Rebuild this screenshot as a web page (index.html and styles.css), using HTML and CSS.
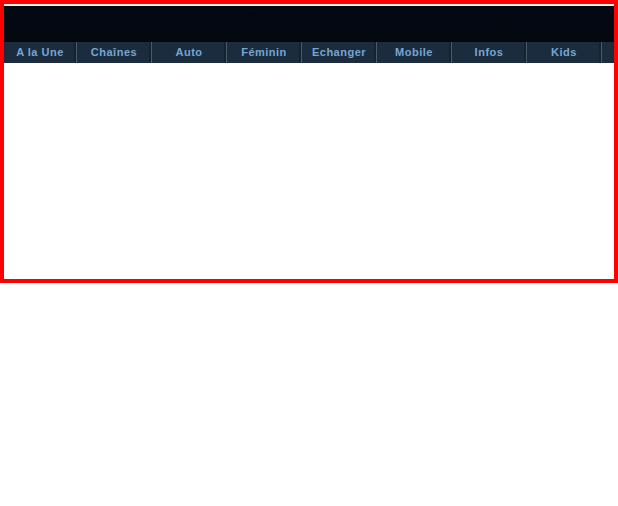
FILE: index.html
```html
<!DOCTYPE html>
<html lang="fr">
<head>
    <meta charset="UTF-8">
    <title>Portail</title>
    <link rel="stylesheet" href="styles.css">
</head>
<body>
    <div id="frame">
        <div class="top-line"></div>
        <div id="header"></div>
        <ul class="nav">
            <li class="first">A la Une</li>
            <li>Chaînes</li>
            <li>Auto</li>
            <li>Féminin</li>
            <li>Echanger</li>
            <li>Mobile</li>
            <li>Infos</li>
            <li>Kids</li>
        </ul>
        <div id="main"></div>
    </div>
</body>
</html>
```

FILE: styles.css
```css
*, *::before, *::after {
    box-sizing: border-box;
}

body {
    margin: 0;
    background-color: #ffffff;
    font-family: "Liberation Sans", Arial, sans-serif;
}

#frame {
    width: 618px;
    height: 283px;
    border: 4px solid #ff0000;
    display: flex;
    flex-direction: column;
    background-color: #ffffff;
}

.top-line {
    height: 2px;
    background-color: #fbeee6;
}

#header {
    height: 36px;
    background: linear-gradient(#020812, #05080f);
}

.nav {
    display: flex;
    height: 21px;
    margin: 0;
    padding: 0;
    list-style: none;
    background-color: #1b2c3e;
}
.nav li {
    width: 75px;
    line-height: 21px;
    text-align: center;
    font-size: 11px;
    font-weight: bold;
    letter-spacing: 0.5px;
    color: #78a6d0;
    border-right: 1px solid #4a5a6a;
    box-shadow: inset -2px 0 0 #15222f;
}
.nav li.first {
    width: 73px;
}

#main {
    flex: 1;
}
```
